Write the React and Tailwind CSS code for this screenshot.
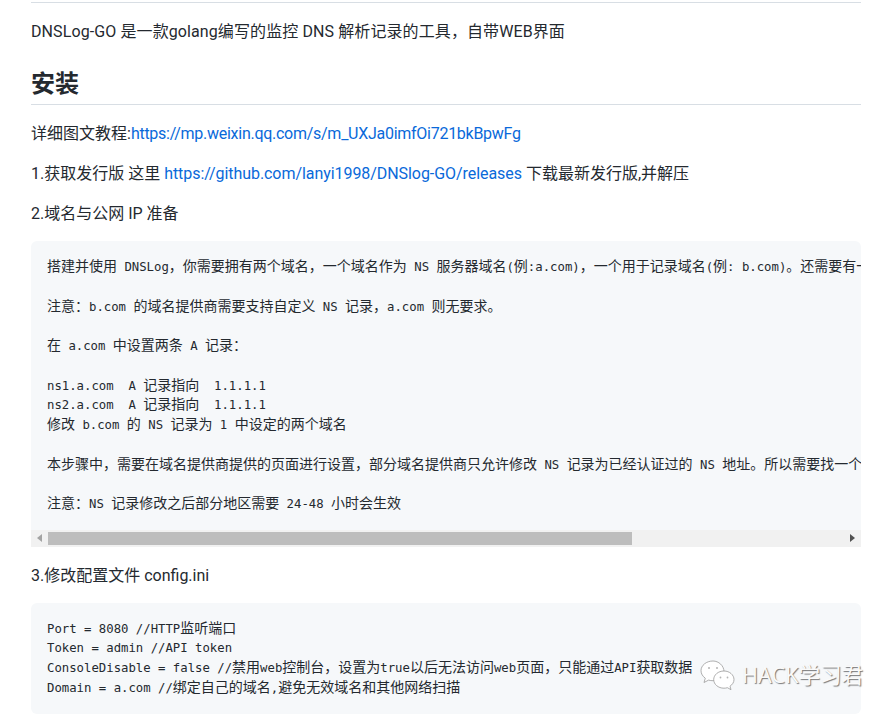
import React from "react";

const mono = "font-['DejaVu_Sans_Mono','Noto_Sans_CJK_SC',monospace]";

// latin runs are set smaller so they keep the 7.4px cell next to 14px CJK
const CodeLine = ({ text }) => {
  if (!text) return <div className="h-[19.75px]" />;
  const parts = text.split(/([\x00-\x7F]+)/).filter(Boolean);
  return (
    <div className="h-[19.75px] leading-[19.75px] whitespace-pre">
      {parts.map((part, i) =>
        /^[\x00-\x7F]/.test(part) ? (
          <span key={i} className="text-[12.3px]">
            {part}
          </span>
        ) : (
          <span key={i} className="font-['Noto_Sans_CJK_SC',sans-serif]">
            {part}
          </span>
        ),
      )}
    </div>
  );
};

const CodeBlock = ({ lines, scrollbar }) => (
  <div className={`bg-[#f6f8fa] overflow-hidden mb-[17px] ${scrollbar ? "rounded-t-md" : "rounded-md"}`}>
    <div className={`px-4 pt-[15px] pb-[17px] text-[14px] text-[#24292f] overflow-hidden ${mono}`}>
      {lines.map((line, i) => (
        <CodeLine key={i} text={line} />
      ))}
    </div>
    {scrollbar && (
      <div className="flex items-center h-[17px] bg-[#f1f1f1]">
        <div className="w-[17px] flex justify-center">
          <div className="border-y-[4px] border-y-transparent border-r-[5px] border-r-[#a3a3a3]" />
        </div>
        <div className="w-[584px] h-[13px] bg-[#bdbdbd]" />
        <div className="flex-1" />
        <div className="w-[17px] flex justify-center">
          <div className="border-y-[4px] border-y-transparent border-l-[5px] border-l-[#505050]" />
        </div>
      </div>
    )}
  </div>
);

const Watermark = () => (
  <div className="absolute left-[699px] top-[658px] flex items-center gap-[6px]">
    <svg width="37" height="34" viewBox="0 0 37 34" fill="#ffffff" stroke="#9a9a9a" strokeWidth="0.8">
      <path d="M14 3C7.4 3 2 7.3 2 12.7c0 3 1.7 5.7 4.3 7.5L5 24.5l4.6-2.4c1.4.4 2.9.6 4.4.6 1.2 0 8-3 11-9 0-6-5.4-10.7-11-10.7z" />
      <circle cx="10" cy="10" r="1" fill="#b5b5b5" stroke="none" />
      <circle cx="18" cy="10" r="1" fill="#b5b5b5" stroke="none" />
      <path d="M25 13c-5.8 0-10.3 3.9-10.3 8.6s4.5 8.6 10.3 8.6c1.2 0 2.3-.2 3.4-.5l3.6 2-1-3.5c2.4-1.6 4-3.9 4-6.6 0-4.7-4.5-8.6-10-8.6z" />
      <circle cx="21.5" cy="19.5" r="0.9" fill="#b5b5b5" stroke="none" />
      <circle cx="28.5" cy="19.5" r="0.9" fill="#b5b5b5" stroke="none" />
    </svg>
    <span className="text-[21.6px] leading-none whitespace-nowrap text-[#fafafa] [text-shadow:1px_1px_1px_#777] font-['Open_Sans','Noto_Sans_CJK_SC',sans-serif]">
      HACK学习君
    </span>
  </div>
);

const dnsLines = [
  "搭建并使用 DNSLog，你需要拥有两个域名，一个域名作为 NS 服务器域名(例:a.com)，一个用于记录域名(例: b.com)。还需要有一",
  "",
  "注意：b.com 的域名提供商需要支持自定义 NS 记录，a.com 则无要求。",
  "",
  "在 a.com 中设置两条 A 记录：",
  "",
  "ns1.a.com  A 记录指向  1.1.1.1",
  "ns2.a.com  A 记录指向  1.1.1.1",
  "修改 b.com 的 NS 记录为 1 中设定的两个域名",
  "",
  "本步骤中，需要在域名提供商提供的页面进行设置，部分域名提供商只允许修改 NS 记录为已经认证过的 NS 地址。所以需要找一个",
  "",
  "注意：NS 记录修改之后部分地区需要 24-48 小时会生效",
];

const configLines = [
  "Port = 8080 //HTTP监听端口",
  "Token = admin //API token",
  "ConsoleDisable = false //禁用web控制台，设置为true以后无法访问web页面，只能通过API获取数据",
  "Domain = a.com //绑定自己的域名,避免无效域名和其他网络扫描",
];

export default function App() {
  return (
    <div className="relative h-[716px] overflow-hidden bg-white pl-[31px] pr-[32px] pt-[2px] text-[16px] text-[#24292f] font-['Roboto','Noto_Sans_CJK_SC',sans-serif]">
      <div className="h-px bg-[#d8dee4] mb-[17px]" />
      <p className="leading-[24px] mb-[25px] tracking-[0.1px]">
        DNSLog-GO 是一款golang编写的监控 DNS 解析记录的工具，自带WEB界面
      </p>
      <h2 className="text-[24px] font-bold leading-[30px] pb-[5px] border-b border-[#d8dee4] mb-[17px]">
        安装
      </h2>
      <p className="leading-[24px] mb-[16px]">
        详细图文教程:
        <a className="text-[#0969da] tracking-[-0.27px]">https://mp.weixin.qq.com/s/m_UXJa0imfOi721bkBpwFg</a>
      </p>
      <p className="leading-[24px] mb-[16px]">
        1.获取发行版 这里{" "}
        <a className="text-[#0969da] tracking-[-0.06px]">https://github.com/lanyi1998/DNSlog-GO/releases</a>{" "}
        下载最新发行版,并解压
      </p>
      <p className="leading-[24px] mb-[15px]">2.域名与公网 IP 准备</p>
      <CodeBlock lines={dnsLines} scrollbar />
      <p className="leading-[24px] mb-[15px]">3.修改配置文件 config.ini</p>
      <CodeBlock lines={configLines} />
      <Watermark />
    </div>
  );
}
